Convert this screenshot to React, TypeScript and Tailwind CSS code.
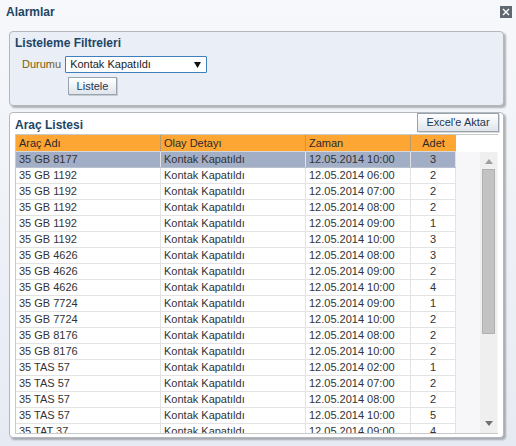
import React from "react";

const rows: [string, string, string][] = [
  ["35 GB 8177", "12.05.2014 10:00", "3"],
  ["35 GB 1192", "12.05.2014 06:00", "2"],
  ["35 GB 1192", "12.05.2014 07:00", "2"],
  ["35 GB 1192", "12.05.2014 08:00", "2"],
  ["35 GB 1192", "12.05.2014 09:00", "1"],
  ["35 GB 1192", "12.05.2014 10:00", "3"],
  ["35 GB 4626", "12.05.2014 08:00", "3"],
  ["35 GB 4626", "12.05.2014 09:00", "2"],
  ["35 GB 4626", "12.05.2014 10:00", "4"],
  ["35 GB 7724", "12.05.2014 09:00", "1"],
  ["35 GB 7724", "12.05.2014 10:00", "2"],
  ["35 GB 8176", "12.05.2014 08:00", "2"],
  ["35 GB 8176", "12.05.2014 10:00", "2"],
  ["35 TAS 57", "12.05.2014 02:00", "1"],
  ["35 TAS 57", "12.05.2014 07:00", "2"],
  ["35 TAS 57", "12.05.2014 08:00", "2"],
  ["35 TAS 57", "12.05.2014 10:00", "5"],
  ["35 TAT 37", "12.05.2014 09:00", "4"],
];

export default function App() {
  return (
    <div
      className="w-[516px] h-[446px] overflow-hidden flex flex-col bg-gradient-to-b from-[#f6f8fb] to-[#e6ebf3] text-[11px] text-[#333]"
      style={{ fontFamily: '"Liberation Sans", Arial, sans-serif' }}
    >
      {/* title bar */}
      <div className="h-[24px] flex items-center justify-between pl-[6px] pr-[4px] shrink-0">
        <span className="font-bold text-[12px] text-[#1d4566]">Alarmlar</span>
        <div className="w-[12px] h-[12px] bg-[#5f6770] flex items-center justify-center mt-[-1px]">
          <svg width="8" height="8" viewBox="0 0 8 8">
            <path d="M1 1 L7 7 M7 1 L1 7" stroke="#fff" strokeWidth="1.4" />
          </svg>
        </div>
      </div>

      {/* filter panel */}
      <div className="ml-[9px] mt-[7px] w-[495px] h-[75px] shrink-0 rounded-[4px] border border-[#b3b8bf] bg-[#eaeff7] shadow-[2px_2px_2px_rgba(0,0,0,0.28)] flex flex-col">
        <div className="pl-[5px] pt-[4px] font-bold text-[12px] text-[#1d4566] leading-[14px]">
          Listeleme Filtreleri
        </div>
        <div className="flex items-center mt-[6px] ml-[12px] h-[17px]">
          <span className="text-[#7a5c0c] mr-[4px]">Durumu</span>
          <div className="w-[142px] h-[17px] border border-[#3f7fbd] rounded-[1px] bg-white flex items-center justify-between pl-[4px] pr-[5px]">
            <span className="text-[#222]">Kontak Kapatıldı</span>
            <svg width="7" height="6" viewBox="0 0 7 6">
              <path d="M0 0 H7 L3.5 6 Z" fill="#111" />
            </svg>
          </div>
        </div>
        <div className="ml-[58px] mt-[4px] w-[49px] h-[18px] border border-[#98a3ae] bg-gradient-to-b from-[#ffffff] to-[#dfe5ec] flex items-center justify-center text-[#1f3550] shadow-[1px_1px_0_rgba(0,0,0,0.15)]">
          Listele
        </div>
      </div>

      {/* list panel */}
      <div className="ml-[9px] mt-[6px] w-[495px] h-[326px] shrink-0 rounded-[4px] border border-[#b3b8bf] bg-white shadow-[2px_2px_2px_rgba(0,0,0,0.28)] flex flex-col">
        <div className="h-[21px] flex items-start justify-between pl-[5px] pr-[4px] shrink-0">
          <span className="font-bold text-[12px] text-[#1d4566] mt-[5px] leading-[14px]">Araç Listesi</span>
          <div className="w-[82px] h-[19px] border border-[#98a3ae] bg-gradient-to-b from-[#ffffff] to-[#dfe5ec] flex items-center justify-center text-[#1f3550] shadow-[1px_1px_0_rgba(0,0,0,0.15)]">
            Excel'e Aktar
          </div>
        </div>
        <div className="ml-[5px] w-[483px] h-[300px] border-t border-l border-b border-[#c9c9c9] flex overflow-hidden">
          {/* table */}
          <div className="w-[440px] shrink-0 flex flex-col">
            <div className="h-[17px] bg-[#fea634] flex shrink-0 border-b border-[#d8d8d8] text-[#2a2a2a]">
              <div className="w-[145px] pl-[3px] flex items-center border-r border-[#b99a6a]">Araç Adı</div>
              <div className="w-[145px] pl-[3px] flex items-center border-r border-[#b99a6a]">Olay Detayı</div>
              <div className="w-[105px] pl-[3px] flex items-center border-r border-[#b99a6a]">Zaman</div>
              <div className="w-[45px] flex items-center justify-center">Adet</div>
            </div>
            {rows.map((r, i) => (
              <div
                key={i}
                className={
                  i === 0
                    ? "h-[16px] shrink-0 flex bg-[#a2aec6] border-b border-[#b8c0d0]"
                    : "h-[16px] shrink-0 flex bg-white border-b border-[#e3e3e3]"
                }
              >
                <div className="w-[145px] pl-[3px] flex items-center border-r border-[#e3e3e3]">{r[0]}</div>
                <div className="w-[145px] pl-[3px] flex items-center border-r border-[#e3e3e3]">Kontak Kapatıldı</div>
                <div className="w-[105px] pl-[3px] flex items-center border-r border-[#e3e3e3]">{r[1]}</div>
                <div className="w-[45px] flex items-center justify-center border-r border-[#e3e3e3]">{r[2]}</div>
              </div>
            ))}
          </div>
          {/* scroll area */}
          <div className="flex-1 flex flex-col">
            <div className="h-[17px] bg-white shrink-0" />
            <div className="flex-1 flex bg-[#f7f7f9]">
              <div className="w-[24px]" />
              <div className="w-[17px] bg-[#efefef] flex flex-col items-center">
                <svg width="8" height="5" viewBox="0 0 8 5" className="mt-[7px]">
                  <path d="M0 5 H8 L4 0 Z" fill="#a0a0a0" />
                </svg>
                <div className="mt-[5px] w-[13px] h-[165px] bg-[#c3c3c3] border border-[#b0b0b0]" />
                <div className="flex-1" />
                <svg width="8" height="5" viewBox="0 0 8 5" className="mb-[7px]">
                  <path d="M0 0 H8 L4 5 Z" fill="#707070" />
                </svg>
              </div>
            </div>
          </div>
        </div>
      </div>
    </div>
  );
}
